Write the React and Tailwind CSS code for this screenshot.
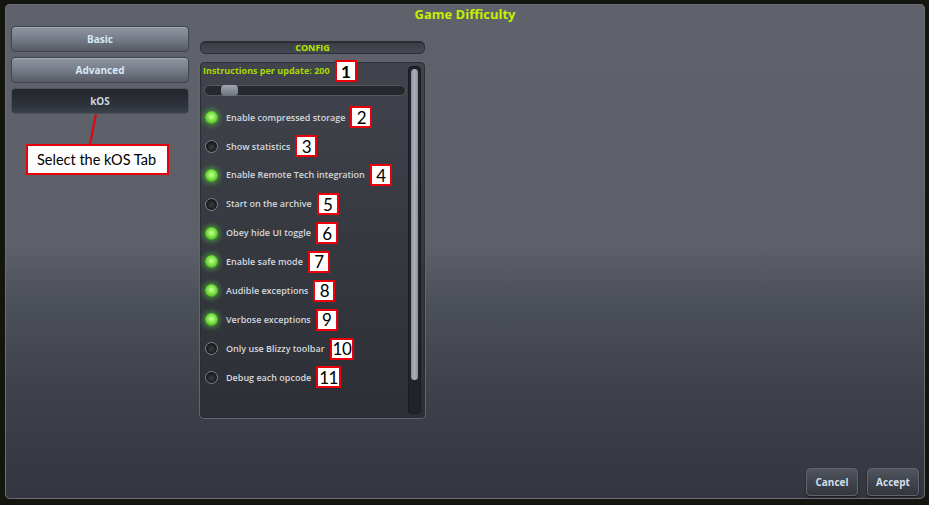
import React from 'react';

const rows = [
  { label: 'Enable compressed storage', on: true, n: 2 },
  { label: 'Show statistics', on: false, n: 3 },
  { label: 'Enable Remote Tech integration', on: true, n: 4 },
  { label: 'Start on the archive', on: false, n: 5 },
  { label: 'Obey hide UI toggle', on: true, n: 6 },
  { label: 'Enable safe mode', on: true, n: 7 },
  { label: 'Audible exceptions', on: true, n: 8 },
  { label: 'Verbose exceptions', on: true, n: 9 },
  { label: 'Only use Blizzy toolbar', on: false, n: 10 },
  { label: 'Debug each opcode', on: false, n: 11 },
];

function Badge({ n }) {
  return (
    <span className="ml-[5px] -my-[6px] inline-flex h-[22px] min-w-[22px] shrink-0 items-center justify-center border-2 border-[#e8000b] bg-white px-[1px] font-['Lato',sans-serif] text-[17px] leading-none tracking-[-0.5px] text-black">
      {n}
    </span>
  );
}

function Radio({ on }) {
  return on ? (
    <span className="h-[13px] w-[13px] shrink-0 rounded-full bg-[radial-gradient(circle_at_50%_45%,#c8ff9a_0%,#78e040_45%,#3a9a1a_85%)] shadow-[0_0_5px_2px_rgba(90,230,60,0.45)]" />
  ) : (
    <span className="h-[13px] w-[13px] shrink-0 rounded-full border border-[#80838a] bg-[radial-gradient(circle_at_50%_55%,#3c3e42_0%,#151618_70%)]" />
  );
}

function Tab({ label, active }) {
  return (
    <div
      className={
        active
          ? 'flex h-[26px] items-center justify-center rounded-[4px] border border-[#4e535c] bg-[linear-gradient(#23262d,#2e323a_70%,#3d414a)] text-[10px] font-bold text-[#c9d5de]'
          : 'flex h-[26px] items-center justify-center rounded-[4px] border border-[#3f434b] bg-[linear-gradient(#8f95a0,#7a808b_45%,#555a63)] text-[10px] font-bold text-[#d6e8f4] shadow-[inset_0_1px_0_#a4aab4]'
      }
    >
      {label}
    </div>
  );
}

function Button({ label }) {
  return (
    <div className="flex h-[28px] w-[52px] items-center justify-center rounded-[4px] border border-[#5f646d] bg-[linear-gradient(#50555e,#3d4149_60%,#33363d)] text-[10px] font-bold text-[#d3dfea] shadow-[0_1px_2px_rgba(0,0,0,0.6)]">
      {label}
    </div>
  );
}

export default function App() {
  return (
    <div className="h-[505px] w-[929px] bg-[#15150f] pb-[6px] pl-[5px] pr-[4px] pt-[4px] font-['Open_Sans',sans-serif]">
      <div className="relative flex h-full flex-col rounded-[5px] bg-[linear-gradient(#5f626a_0%,#5d6068_49%,#4c5058_60%,#3d4048_80%,#33363e_100%)] shadow-[inset_0_0_0_1px_#6b6e76]">
        <div className="flex h-[22px] items-center justify-center text-[13px] font-bold text-[#c6f000]">
          Game Difficulty
        </div>

        <div className="flex flex-1 gap-[11px] pl-[6px]">
          <div className="flex w-[178px] flex-col gap-[5px]">
            <Tab label="Basic" />
            <Tab label="Advanced" />
            <Tab label="kOS" active />
          </div>

          <div className="mt-[15px] flex w-[225px] flex-col gap-[8px]">
            <div className="flex h-[13px] items-center justify-center rounded-[5px] border border-[#2c2f35] bg-[linear-gradient(#3a3d45,#454952)] text-[9px] font-bold leading-none text-[#b8e800] shadow-[inset_0_1px_0_#2a2c31]">
              CONFIG
            </div>

            <div className="flex h-[356px] rounded-[4px] border border-[#2b2e34] bg-[linear-gradient(#41444c,#363940_50%,#2c2f36)] pl-[2px] pr-[3px] pt-[1px] shadow-[0_0_0_1px_#62666e]">
              <div className="flex flex-1 flex-col">
                <div className="flex h-[14px] items-center text-[9px] font-bold text-[#a9d800]">
                  Instructions per update: 200
                  <Badge n={1} />
                </div>
                <div className="mt-[7px] ml-[1px] mr-[2px] flex h-[11px] items-center rounded-full border border-[#55595f] bg-[#26282d] pl-[16px]">
                  <span className="h-[11px] w-[17px] rounded-[4px] bg-[linear-gradient(#a2a8b3,#6b717c)]" />
                </div>
                <div className="mt-[7px] flex flex-col">
                  {rows.map((r) => (
                    <div key={r.n} className="flex h-[28.9px] items-center pl-[2px]">
                      <Radio on={r.on} />
                      <span className="ml-[8px] text-[9px] font-semibold text-[#d4d7dc]">{r.label}</span>
                      <Badge n={r.n} />
                    </div>
                  ))}
                </div>
              </div>
              <div className="mb-[3px] mt-[2px] flex w-[13px] justify-center rounded-[4px] border border-[#1a1c20] bg-[#20232a] pt-[2px]">
                <span className="h-[311px] w-[7px] rounded-full bg-[linear-gradient(90deg,#8c929e,#aab0bb_50%,#8a909b)]" />
              </div>
            </div>
          </div>
        </div>

        <div className="flex justify-end gap-[9px] pb-[3px] pr-[6px]">
          <Button label="Cancel" />
          <Button label="Accept" />
        </div>

        <svg className="absolute left-[84px] top-[110px]" width="10" height="32" viewBox="0 0 10 32">
          <line x1="7" y1="0" x2="1" y2="30" stroke="#e8000b" strokeWidth="2" />
        </svg>
        <div className="absolute left-[21px] top-[140px] flex h-[31px] w-[143px] items-center border-2 border-[#e8000b] bg-white pl-[9px] font-['Lato',sans-serif] text-[14.5px] text-black">
          Select the kOS Tab
        </div>
      </div>
    </div>
  );
}
